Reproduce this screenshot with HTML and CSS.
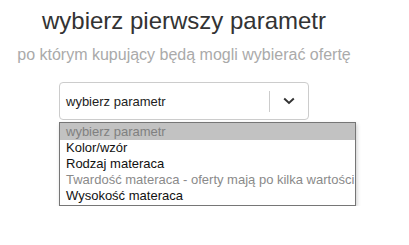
FILE: index.html
```html
<!DOCTYPE html>
<html lang="pl">
<head>
    <meta charset="UTF-8">
    <meta name="viewport" content="width=device-width, initial-scale=1.0">
    <title>Wybierz parametr</title>
    <link rel="stylesheet" href="styles.css">
</head>
<body>
    <div class="panel">
        <h2 class="title">wybierz pierwszy parametr</h2>
        <p class="subtitle">po którym kupujący będą mogli wybierać ofertę</p>

        <div class="picker">
            <div class="select">
                <span class="select-value">wybierz parametr</span>
                <span class="select-sep"></span>
                <span class="select-arrow">
                    <svg width="12" height="8" viewBox="0 0 12 8">
                        <path d="M1.2 1.6 L6 6 L10.8 1.6" fill="none" stroke="#333" stroke-width="2"/>
                    </svg>
                </span>
            </div>

            <ul class="options">
                <li class="option selected">wybierz parametr</li>
                <li class="option">Kolor/wzór</li>
                <li class="option">Rodzaj materaca</li>
                <li class="option disabled">Twardość materaca - oferty mają po kilka wartości</li>
                <li class="option">Wysokość materaca</li>
            </ul>
        </div>
    </div>
</body>
</html>
```

FILE: styles.css
```css
body {
    margin: 0;
    font-family: "Liberation Sans", Arial, sans-serif;
    background: #fff;
}
.panel {
    width: 368px;
    text-align: center;
}
.title {
    margin: 7px 0 0;
    font-size: 24px;
    line-height: 28px;
    font-weight: normal;
    color: #333;
}
.subtitle {
    margin: 11px 0 0;
    font-size: 16px;
    line-height: 18px;
    color: #aaa;
}
.picker {
    width: 250px;
    margin: 18px auto 0;
    text-align: left;
}
.select {
    display: flex;
    align-items: center;
    box-sizing: border-box;
    width: 250px;
    height: 38px;
    border: 1px solid #ccc;
    border-radius: 4px;
    background: #fff;
}
.select-value {
    flex: 1;
    padding-left: 6px;
    font-size: 13px;
    color: #222;
}
.select-sep {
    width: 1px;
    height: 21px;
    background: #ccc;
}
.select-arrow {
    display: flex;
    justify-content: center;
    width: 38px;
}
.options {
    list-style: none;
    margin: 2px 0 0;
    padding: 1px 0;
    width: 297px;
    box-sizing: border-box;
    border: 1px solid #767676;
    background: #fff;
    box-shadow: 1px 2px 4px rgba(0, 0, 0, 0.2);
    white-space: nowrap;
}
.option {
    padding: 0 0 1px 6px;
    font-size: 13px;
    line-height: 15px;
    color: #111;
}
.option.selected {
    margin-top: -1px;
    padding-top: 1px;
    padding-bottom: 1px;
    background: #c2c2c2;
    color: #808080;
}
.option.disabled {
    color: #8a8a8a;
}
```
